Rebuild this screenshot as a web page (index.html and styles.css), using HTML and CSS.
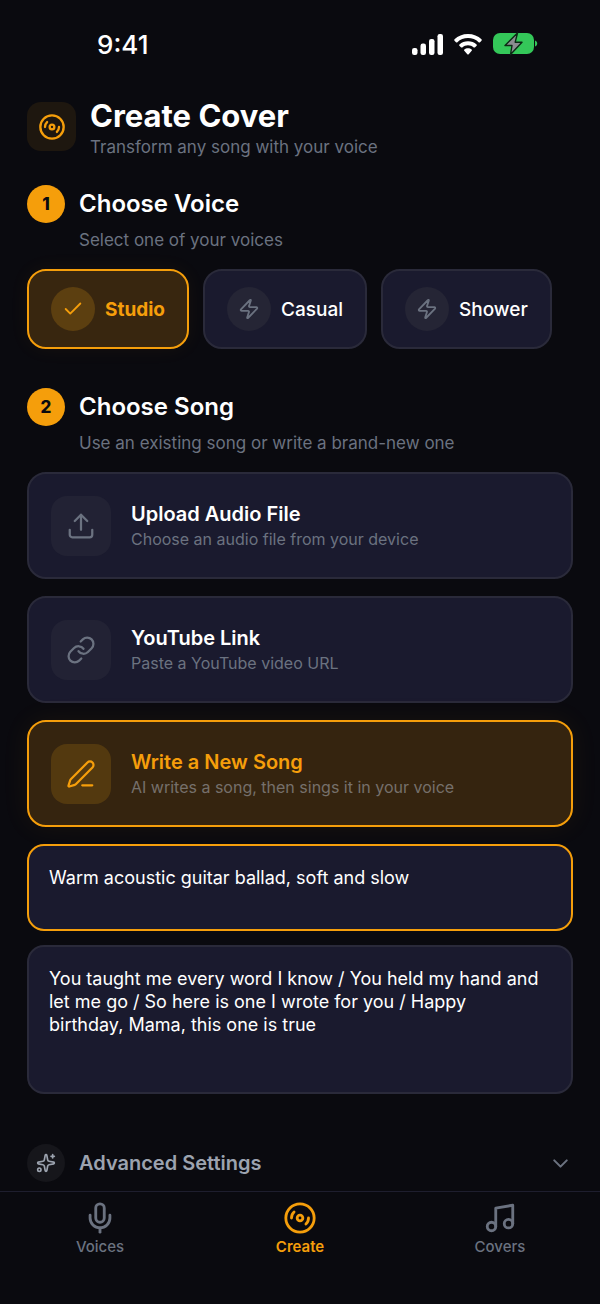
FILE: index.html
```html
<!DOCTYPE html>
<html lang="en">
<head>
    <meta charset="UTF-8">
    <meta name="viewport" content="width=device-width, initial-scale=1">
    <title>Create Cover</title>
    <link rel="stylesheet" href="styles.css">
</head>
<body>
    <!-- Shared icons -->
    <svg class="icon-defs" aria-hidden="true">
        <symbol id="disc" viewBox="0 0 24 24">
            <circle cx="12" cy="12" r="10"/>
            <path d="M6 12c0-1.7.7-3.2 1.8-4.2"/>
            <circle cx="12" cy="12" r="2"/>
            <path d="M18 12c0 1.7-.7 3.2-1.8 4.2"/>
        </symbol>
        <symbol id="zap" viewBox="0 0 24 24">
            <path d="M4 14a1 1 0 0 1-.78-1.63l9.9-10.2a.5.5 0 0 1 .86.46l-1.92 6.02A1 1 0 0 0 13 10h7a1 1 0 0 1 .78 1.63l-9.9 10.2a.5.5 0 0 1-.86-.46l1.92-6.02A1 1 0 0 0 11 14z"/>
        </symbol>
    </svg>

    <div class="status-bar">
        <span class="time">9:41</span>
        <div class="status-icons">
            <svg class="signal" viewBox="0 0 31 21">
                <rect x="0" y="14" width="5.5" height="7" rx="2.200"/>
                <rect x="8.5" y="9.500" width="5.5" height="11.500" rx="2.200"/>
                <rect x="17" y="5" width="5.5" height="16" rx="2.200"/>
                <rect x="25.5" y="0" width="5.5" height="21" rx="2.200"/>
            </svg>
            <svg class="wifi" viewBox="0 0 28 21">
                <path d="M14 0C8.700 0 3.900 2 .5 5.300c-.4.400-.4 1 0 1.400l1.500 1.500c.4.400 1 .400 1.400 0C6.200 5.600 9.900 4.100 14 4.100s7.800 1.500 10.600 4.100c.4.400 1 .400 1.400 0l1.500-1.500c.4-.400.4-1 0-1.400C24.100 2 19.300 0 14 0z"/>
                <path d="M14 7.200c-3.300 0-6.300 1.200-8.600 3.200-.4.400-.4 1 0 1.400l1.500 1.500c.4.400 1 .400 1.400.1 1.600-1.300 3.500-2.100 5.700-2.100s4.100.8 5.700 2.100c.4.300 1 .300 1.400-.1l1.500-1.500c.4-.400.4-1 0-1.400-2.300-2-5.300-3.200-8.600-3.200z"/>
                <path d="M14 14.200c-1.400 0-2.700.5-3.700 1.300-.4.400-.4.900 0 1.300l3 3.400c.4.400 1 .400 1.400 0l3-3.400c.4-.4.4-.9 0-1.300-1-.8-2.300-1.300-3.700-1.300z"/>
            </svg>
            <svg class="battery" viewBox="0 0 45 24">
                <rect x="0" y="1" width="41" height="21" rx="7" fill="#34c759"/>
                <path d="M42 8.500v6c1.500-.5 2.200-1.600 2.200-3s-.7-2.500-2.200-3z" fill="#34c759"/>
                <path d="M24.500 1 12 13.500h7L17.500 22.500 29 10.200h-6.800z" fill="#8b8d90" stroke="#0b2a14" stroke-width="1.400" stroke-linejoin="round"/>
            </svg>
        </div>
    </div>

    <main class="content">
        <header class="page-header">
            <div class="header-icon"><svg class="icon"><use href="#disc"/></svg></div>
            <div>
                <h1>Create Cover</h1>
                <p class="hint">Transform any song with your voice</p>
            </div>
        </header>

        <section class="step voice-step">
            <div class="step-header">
                <span class="badge">1</span>
                <h2>Choose Voice</h2>
            </div>
            <p class="hint step-hint">Select one of your voices</p>
            <div class="voices">
                <button type="button" class="voice active" aria-pressed="true">
                    <span class="voice-icon"><svg class="icon" viewBox="0 0 24 24"><path d="M20 6 9 17l-5-5"/></svg></span>
                    Studio
                </button>
                <button type="button" class="voice">
                    <span class="voice-icon"><svg class="icon"><use href="#zap"/></svg></span>
                    Casual
                </button>
                <button type="button" class="voice">
                    <span class="voice-icon"><svg class="icon"><use href="#zap"/></svg></span>
                    Shower
                </button>
            </div>
        </section>

        <section class="step song-step">
            <div class="step-header">
                <span class="badge">2</span>
                <h2>Choose Song</h2>
            </div>
            <p class="hint step-hint">Use an existing song or write a brand-new one</p>
            <div class="sources">
                <button type="button" class="source">
                    <span class="source-icon">
                        <svg class="icon" viewBox="0 0 24 24"><path d="M21 15v4a2 2 0 0 1-2 2H5a2 2 0 0 1-2-2v-4"/><path d="m17 8-5-5-5 5"/><path d="M12 3v12"/></svg>
                    </span>
                    <span class="source-text">
                        <span class="source-title">Upload Audio File</span>
                        <span class="source-sub">Choose an audio file from your device</span>
                    </span>
                </button>
                <button type="button" class="source">
                    <span class="source-icon">
                        <svg class="icon" viewBox="0 0 24 24"><path d="M10 13a5 5 0 0 0 7.540.540l3-3a5 5 0 0 0-7.070-7.070l-1.720 1.710"/><path d="M14 11a5 5 0 0 0-7.540-.540l-3 3a5 5 0 0 0 7.070 7.070l1.710-1.710"/></svg>
                    </span>
                    <span class="source-text">
                        <span class="source-title">YouTube Link</span>
                        <span class="source-sub">Paste a YouTube video URL</span>
                    </span>
                </button>
                <button type="button" class="source active" aria-pressed="true">
                    <span class="source-icon">
                        <svg class="icon" viewBox="0 0 24 24"><path d="M13 21h8"/><path d="M21.174 6.812a1 1 0 0 0-3.986-3.987L3.842 16.174a2 2 0 0 0-.5.830l-1.321 4.352a.5.5 0 0 0 .623.622l4.353-1.320a2 2 0 0 0 .830-.497z"/></svg>
                    </span>
                    <span class="source-text">
                        <span class="source-title">Write a New Song</span>
                        <span class="source-sub">AI writes a song, then sings it in your voice</span>
                    </span>
                </button>
            </div>
            <div class="fields">
                <textarea class="field style-field" aria-label="Song style">Warm acoustic guitar ballad, soft and slow</textarea>
                <textarea class="field lyrics-field" aria-label="Lyrics">You taught me every word I know / You held my hand and let me go / So here is one I wrote for you / Happy birthday, Mama, this one is true</textarea>
            </div>
        </section>

        <button type="button" class="advanced" aria-expanded="false">
            <span class="advanced-icon">
                <svg class="icon" viewBox="0 0 24 24"><path d="M11.017 2.814a1 1 0 0 1 1.966 0l1.051 5.558a2 2 0 0 0 1.594 1.594l5.558 1.051a1 1 0 0 1 0 1.966l-5.558 1.051a2 2 0 0 0-1.594 1.594l-1.051 5.558a1 1 0 0 1-1.966 0l-1.051-5.558a2 2 0 0 0-1.594-1.594l-5.558-1.051a1 1 0 0 1 0-1.966l5.558-1.051a2 2 0 0 0 1.594-1.594z"/><path d="M20 2v4"/><path d="M22 4h-4"/><circle cx="4" cy="20" r="2"/></svg>
            </span>
            <span class="advanced-label">Advanced Settings</span>
            <svg class="icon chevron" viewBox="0 0 24 24"><path d="m6 9 6 6 6-6"/></svg>
        </button>
    </main>

    <nav class="tab-bar">
        <a href="#voices" class="tab">
            <svg class="icon" viewBox="0 0 24 24"><path d="M12 19v3"/><path d="M19 10v2a7 7 0 0 1-14 0v-2"/><rect x="9" y="2" width="6" height="13" rx="3"/></svg>
            Voices
        </a>
        <a href="#create" class="tab active" aria-current="page">
            <svg class="icon"><use href="#disc"/></svg>
            Create
        </a>
        <a href="#covers" class="tab">
            <svg class="icon" viewBox="0 0 24 24"><path d="M9 18V5l12-2v13"/><circle cx="6" cy="18" r="3"/><circle cx="18" cy="16" r="3"/></svg>
            Covers
        </a>
    </nav>
</body>
</html>
```

FILE: styles.css
```css
* {
    box-sizing: border-box;
}
body {
    margin: 0;
    min-height: 100vh;
    display: flex;
    flex-direction: column;
    background-color: #0a0a0f;
    color: #fff;
    font-family: Inter, "Liberation Sans", sans-serif;
}
h1, h2, p {
    margin: 0;
}
button {
    font-family: inherit;
    color: inherit;
    text-align: left;
    cursor: pointer;
}
.icon-defs {
    position: absolute;
    width: 0;
    height: 0;
}
.icon {
    display: block;
    flex: none;
    fill: none;
    stroke: currentColor;
    stroke-width: 2;
    stroke-linecap: round;
    stroke-linejoin: round;
}

/* Status bar */
.status-bar {
    display: flex;
    justify-content: space-between;
    align-items: center;
    height: 88px;
    padding: 0 62px 0 97px;
}
.time {
    font-size: 26px;
    font-weight: 500;
}
.status-icons {
    display: flex;
    align-items: center;
    gap: 11px;
    fill: #fff;
}
.signal {
    width: 31px;
    height: 21px;
}
.wifi {
    width: 28px;
    height: 21px;
}
.battery {
    width: 45px;
    height: 24px;
}

/* Page */
.content {
    padding: 10px 27px 9px;
}
.page-header {
    display: flex;
    align-items: flex-start;
    gap: 14px;
}
.header-icon {
    display: flex;
    align-items: center;
    justify-content: center;
    width: 49px;
    height: 49px;
    margin-top: 4px;
    border-radius: 14px;
    background-color: #1e170f;
    color: #f59e0b;
}
.header-icon .icon {
    width: 28px;
    height: 28px;
}
h1 {
    margin-bottom: 2px;
    font-size: 31px;
    line-height: 35px;
    font-weight: 700;
}
.hint {
    font-size: 17px;
    line-height: 24px;
    color: #6b7280;
}
.step {
    margin-top: 26px;
}
.song-step {
    margin-top: 39px;
}
.step-header {
    display: flex;
    align-items: center;
    gap: 14px;
}
.badge {
    display: flex;
    align-items: center;
    justify-content: center;
    width: 38px;
    height: 38px;
    border-radius: 50%;
    background-color: #f59e0b;
    color: #0a0a0f;
    font-size: 17px;
    font-weight: 800;
}
h2 {
    font-size: 24px;
    line-height: 28px;
    font-weight: 600;
}
.step-hint {
    margin: 5px 0 17px 52px;
}

/* Voices */
.voices {
    display: flex;
    gap: 14px;
}
.voice {
    display: flex;
    align-items: center;
    gap: 10px;
    height: 80px;
    padding: 0 22px;
    border: 2px solid #2a2a3a;
    border-radius: 19px;
    background-color: #1a1a2e;
    font-size: 19px;
    font-weight: 500;
}
.voice-icon {
    display: flex;
    align-items: center;
    justify-content: center;
    width: 44px;
    height: 44px;
    border-radius: 50%;
    background-color: #252535;
    color: #6b7280;
}
.voice-icon .icon {
    width: 22px;
    height: 22px;
}
.voice.active {
    border-color: #f59e0b;
    background-color: #38260f;
    color: #f59e0b;
    font-weight: 700;
    box-shadow: 0 0 20px rgba(245, 158, 11, 0.06);
}
.voice.active .voice-icon {
    background-color: #5c3f10;
    color: #f59e0b;
}

/* Song sources */
.sources {
    display: flex;
    flex-direction: column;
    gap: 17px;
}
.source {
    display: flex;
    align-items: center;
    gap: 20px;
    height: 107px;
    padding: 0 22px;
    border: 2px solid #2a2a3a;
    border-radius: 19px;
    background-color: #1a1a2e;
}
.source-icon {
    display: flex;
    align-items: center;
    justify-content: center;
    width: 60px;
    height: 60px;
    border-radius: 16px;
    background-color: #222234;
    color: #6b7280;
}
.source-icon .icon {
    width: 30px;
    height: 30px;
    stroke-width: 1.8;
}
.source-text {
    display: flex;
    flex-direction: column;
    padding-top: 1px;
}
.source-title {
    font-size: 20px;
    line-height: 26px;
    font-weight: 600;
}
.source-sub {
    font-size: 16px;
    line-height: 24px;
    color: #6b7280;
}
.source.active {
    border-color: #f59e0b;
    background-color: #35240f;
    box-shadow: 0 0 28px rgba(245, 158, 11, 0.07);
}
.source.active .source-icon {
    background-color: #53390f;
    color: #f59e0b;
}
.source.active .source-title {
    color: #f59e0b;
}
.source.active .source-sub {
    color: #76706b;
}

/* Text fields */
.fields {
    display: flex;
    flex-direction: column;
    gap: 14px;
    margin-top: 17px;
}
.field {
    display: block;
    width: 100%;
    padding: 20px 28px 20px 20px;
    border: 2px solid #2a2a3a;
    border-radius: 17px;
    background-color: #1a1a2e;
    color: #fff;
    font-family: inherit;
    font-size: 18px;
    line-height: 23px;
    resize: none;
    outline: none;
}
.style-field {
    height: 87px;
    border-color: #f59e0b;
}
.lyrics-field {
    height: 149px;
}

/* Advanced settings */
.advanced {
    display: flex;
    align-items: center;
    gap: 14px;
    width: 100%;
    margin-top: 50px;
    padding: 0;
    border: none;
    background: none;
    color: #9ca3af;
}
.advanced-icon {
    display: flex;
    align-items: center;
    justify-content: center;
    width: 38px;
    height: 38px;
    border-radius: 50%;
    background-color: #16161b;
}
.advanced-icon .icon {
    width: 20px;
    height: 20px;
}
.advanced-label {
    flex: 1;
    font-size: 20px;
    font-weight: 600;
}
.chevron {
    width: 25px;
    height: 25px;
    color: #6b7280;
}

/* Tab bar */
.tab-bar {
    position: sticky;
    bottom: 0;
    display: flex;
    height: 113px;
    margin-top: auto;
    padding-top: 9px;
    border-top: 1px solid #1e1e2e;
    background-color: #0a0a0f;
}
.tab {
    flex: 1;
    display: flex;
    flex-direction: column;
    align-items: center;
    gap: 2px;
    font-size: 15px;
    line-height: 20px;
    font-weight: 500;
    color: #6b7280;
    text-decoration: none;
}
.tab .icon {
    width: 34px;
    height: 34px;
}
.tab.active {
    color: #f59e0b;
    font-weight: 600;
}
```
